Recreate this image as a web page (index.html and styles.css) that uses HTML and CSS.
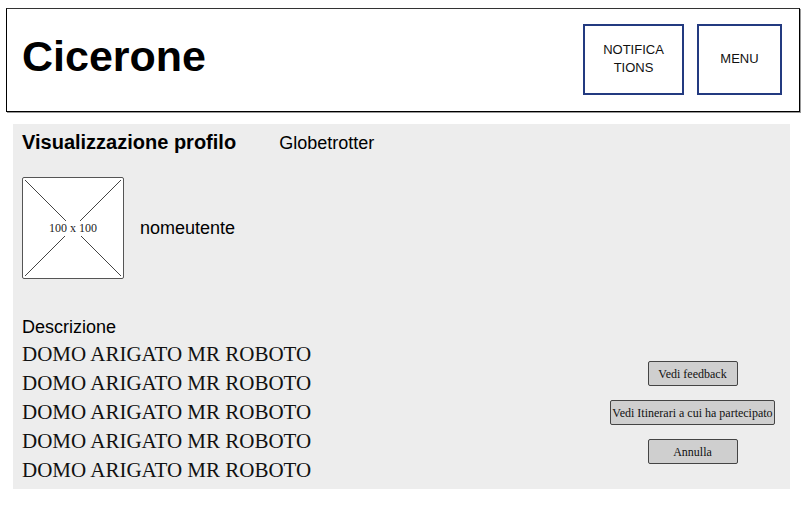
FILE: index.html
```html
<!DOCTYPE html>
<html lang="it">
<head>
<meta charset="utf-8">
<title>Cicerone</title>
<link rel="stylesheet" href="styles.css">
</head>
<body>
<header class="topbar">
  <h1 class="brand">Cicerone</h1>
  <div class="top-actions">
    <button class="top-btn notif">NOTIFICA<br>TIONS</button>
    <button class="top-btn menu">MENU</button>
  </div>
</header>
<main class="panel">
  <div class="title-row">
    <h2 class="page-title">Visualizzazione profilo</h2>
    <span class="role">Globetrotter</span>
  </div>
  <div class="user-row">
    <div class="avatar">
      <svg class="avatar-x" width="100" height="100" viewBox="0 0 100 100" aria-hidden="true">
        <line x1="2" y1="2" x2="44" y2="44" />
        <line x1="98" y1="2" x2="56" y2="44" />
        <line x1="2" y1="98" x2="44" y2="56" />
        <line x1="98" y1="98" x2="56" y2="56" />
      </svg>
      <span class="avatar-label">100 x 100</span>
    </div>
    <span class="username">nomeutente</span>
  </div>
  <div class="lower">
    <div class="desc">
      <div class="desc-label">Descrizione</div>
      <div class="desc-line">DOMO ARIGATO MR ROBOTO</div>
      <div class="desc-line">DOMO ARIGATO MR ROBOTO</div>
      <div class="desc-line">DOMO ARIGATO MR ROBOTO</div>
      <div class="desc-line">DOMO ARIGATO MR ROBOTO</div>
      <div class="desc-line">DOMO ARIGATO MR ROBOTO</div>
    </div>
    <div class="actions">
      <button class="act-btn short">Vedi feedback</button>
      <button class="act-btn wide">Vedi Itinerari a cui ha partecipato</button>
      <button class="act-btn short">Annulla</button>
    </div>
  </div>
</main>
</body>
</html>
```

FILE: styles.css
```css
* { box-sizing: border-box; }

body {
  margin: 0;
  font-family: "Liberation Sans", Arial, sans-serif;
  color: #000;
  background: #fff;
}

.topbar {
  margin: 8px 11px 0 6px;
  height: 104px;
  border: 1px solid #000;
  border-top-color: #333;
  box-shadow: 1px 1px 0 #999;
  display: flex;
  align-items: center;
  justify-content: space-between;
  padding: 0 17px 0 15px;
}

.brand {
  margin: 0;
  font-size: 43px;
  font-weight: bold;
  line-height: 50px;
  position: relative;
  top: -4px;
}

.top-actions {
  display: flex;
  gap: 13px;
  align-items: center;
  position: relative;
  top: -1px;
}

.top-btn {
  background: #fff;
  border: 2px solid #233a80;
  height: 71px;
  font-family: "Liberation Sans", Arial, sans-serif;
  font-size: 13px;
  line-height: 18px;
  color: #111;
  padding: 0;
}

.notif { width: 101px; }
.menu { width: 85px; }

.panel {
  margin: 12px 21px 0 13px;
  background: #ededed;
  padding: 6px 15px 4px 9px;
}

.title-row {
  display: flex;
  align-items: center;
  height: 24px;
}

.page-title {
  margin: 0;
  font-size: 20px;
  font-weight: bold;
  line-height: 24px;
}

.role {
  margin-left: 43px;
  font-size: 18px;
  line-height: 24px;
  position: relative;
  top: 1px;
}

.user-row {
  margin-top: 23px;
  display: flex;
  align-items: center;
  gap: 16px;
}

.avatar {
  width: 102px;
  height: 102px;
  background: #fff;
  border: 1px solid #555;
  border-radius: 2px;
  position: relative;
  display: flex;
  align-items: center;
  justify-content: center;
}

.avatar-x {
  position: absolute;
  left: 0;
  top: 0;
  z-index: 0;
}

.avatar-x line {
  stroke: #444;
  stroke-width: 1;
}

.avatar-label {
  font-family: "Liberation Serif", "Times New Roman", serif;
  font-size: 12px;
  color: #222;
  background: #fff;
  position: relative;
  z-index: 1;
}

.username {
  font-size: 18px;
  line-height: 22px;
}

.lower {
  margin-top: 35px;
  display: flex;
  justify-content: space-between;
  align-items: flex-end;
}

.desc-label {
  font-size: 18px;
  line-height: 26px;
}

.desc-line {
  font-family: "Liberation Serif", "Times New Roman", serif;
  font-size: 21px;
  line-height: 29px;
  color: #111;
}

.actions {
  display: flex;
  flex-direction: column;
  align-items: center;
  gap: 14px;
  margin-bottom: 21px;
}

.act-btn {
  height: 25px;
  background: #cfcfcf;
  border: 1px solid #444;
  border-radius: 2px;
  font-family: "Liberation Serif", "Times New Roman", serif;
  font-size: 12px;
  color: #111;
  padding: 1px 0 0;
}

.act-btn.short { width: 90px; }
.act-btn.wide { width: 165px; }
```
